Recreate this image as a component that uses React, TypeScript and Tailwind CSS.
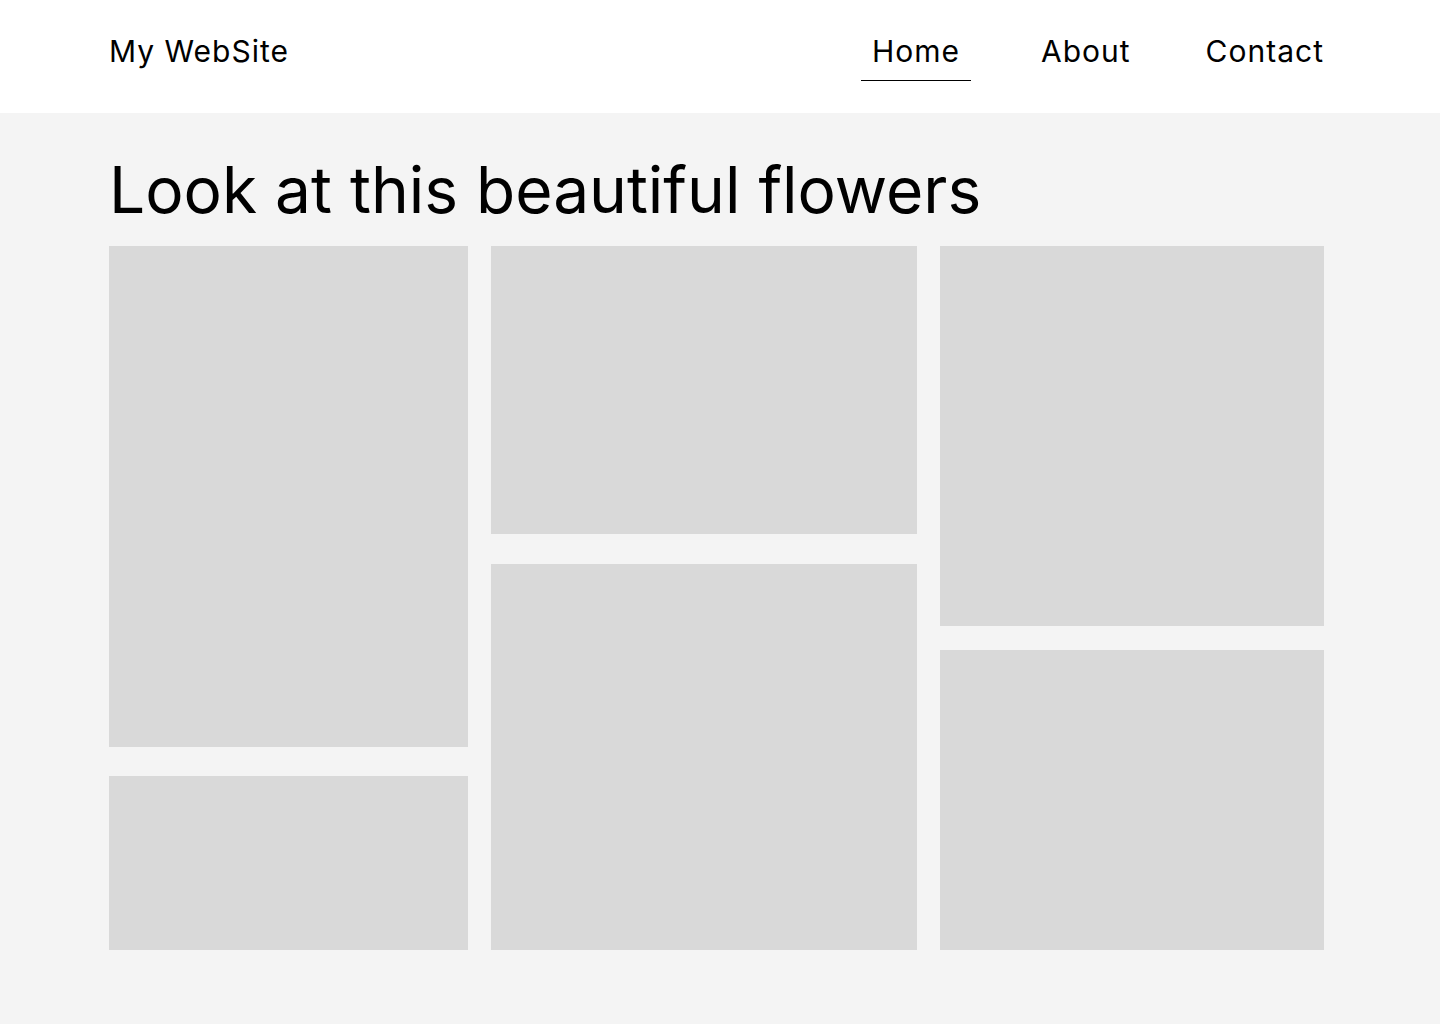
export default function App() {
  const font = { fontFamily: "Inter, 'Liberation Sans', sans-serif" };
  return (
    <div className="min-h-screen bg-[#f4f4f4] text-black" style={font}>
      <header className="h-[113px] bg-white pl-[109px] pr-[116px] pt-[36px] flex items-start justify-between">
        <div className="text-[30px] leading-none tracking-[1px]">My WebSite</div>
        <nav className="flex items-start text-[30px] leading-none tracking-[1px]">
          <a className="w-[110px] text-center pb-[14px] border-b border-black">Home</a>
          <a className="ml-[70px]">About</a>
          <a className="ml-[75px]">Contact</a>
        </nav>
      </header>

      <main className="px-[109px] pt-[45px] pb-[74px]">
        <h1 className="text-[64px] leading-none font-normal">Look at this beautiful flowers</h1>
        <div className="mt-[24px] flex gap-[23px]">
          <div className="w-[359px] flex flex-col gap-[29px]">
            <div className="h-[501px] bg-[#d9d9d9]" />
            <div className="h-[174px] bg-[#d9d9d9]" />
          </div>
          <div className="w-[426px] flex flex-col gap-[30px]">
            <div className="h-[288px] bg-[#d9d9d9]" />
            <div className="h-[386px] bg-[#d9d9d9]" />
          </div>
          <div className="w-[384px] flex flex-col gap-[24px]">
            <div className="h-[380px] bg-[#d9d9d9]" />
            <div className="h-[300px] bg-[#d9d9d9]" />
          </div>
        </div>
      </main>
    </div>
  );
}
